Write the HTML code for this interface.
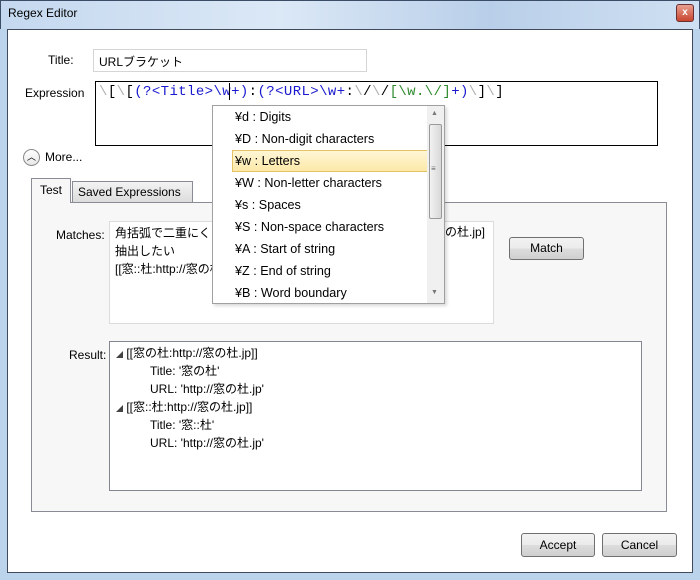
<!DOCTYPE html>
<html><head><meta charset="utf-8"><style>
*{margin:0;padding:0;box-sizing:border-box}
body{width:700px;height:580px;position:relative;overflow:hidden;background:#bcd3ec;font-family:"Liberation Sans","Noto Sans CJK JP",sans-serif;font-size:12px;color:#000}
.a{position:absolute}
.tb{left:0;top:0;width:700px;height:29px;background:linear-gradient(90deg,#c4d8ef,#dbe8f6 40%,#b9cfe9 70%,#cfe0f2);border:1px solid #3b4d66;border-bottom:none}
.client{left:7px;top:29px;width:686px;height:544px;background:#fff;border:1px solid #3f4a5a}
.btn{border:1px solid #707070;border-radius:3px;background:linear-gradient(#f2f2f2,#ebebeb 50%,#dddddd 50%,#cfcfcf);text-align:center;line-height:21px;font-size:12px}
.mono{font-family:"Liberation Mono","DejaVu Sans Mono",monospace;font-size:14px;letter-spacing:0.4px}
.g{color:#b0b0b0}.b{color:#1a1ad0}.gr{color:#2e8b2e}
.it{left:22px;height:22px;line-height:22px;font-size:12.6px;white-space:nowrap}
.row{height:18px;line-height:18px;font-size:12px}
</style></head><body>
<div class="a tb"></div>
<div class="a" style="left:8px;top:6px;font-size:12px">Regex Editor</div>
<div class="a" style="left:676px;top:4px;width:18px;height:18px;border:1px solid #6b3030;border-radius:3px;background:linear-gradient(#e8a090,#c8452e);color:#fff;font-size:10px;text-align:center;line-height:16px;font-weight:bold">x</div>
<div class="a client"></div>
<div class="a" style="left:48px;top:53px">Title:</div>
<div class="a" style="left:93px;top:49px;width:274px;height:23px;border:1px solid #d5d5d5;padding:3px 5px">URLブラケット</div>
<div class="a" style="left:25px;top:86px;width:60px;overflow:hidden;white-space:nowrap">Expression</div>
<div class="a" style="left:95px;top:81px;width:563px;height:65px;border:1px solid #000"></div>
<div class="a mono" style="left:99px;top:84px;white-space:pre"><span class="g">\</span>[<span class="g">\</span>[<span class="b">(?&lt;Title&gt;\w+)</span>:<span class="b">(?&lt;URL&gt;\w+</span>:<span class="g">\</span>/<span class="g">\</span>/<span class="gr">[\w.\/]</span><span class="b">+)</span><span class="g">\</span>]<span class="g">\</span>]</div>
<div class="a" style="left:229px;top:83px;width:1px;height:17px;background:#000"></div>
<div class="a" style="left:23px;top:149px;width:17px;height:17px;border:1px solid #8a8a8a;border-radius:50%;background:linear-gradient(#fff,#e8e8e8);text-align:center;font-size:9px;line-height:14px">︿</div>
<div class="a" style="left:45px;top:150px">More...</div>
<div class="a" style="left:31px;top:202px;width:636px;height:310px;background:#f7f7f7;border:1px solid #898c95"></div>
<div class="a" style="left:31px;top:178px;width:40px;height:25px;background:#f7f7f7;border:1px solid #898c95;border-bottom:none;padding:4px 0 0 8px">Test</div>
<div class="a" style="left:72px;top:181px;width:121px;height:22px;background:linear-gradient(#f3f3f3,#dcdcdc);border:1px solid #898c95;padding:3px 0 0 5px">Saved Expressions</div>
<div class="a" style="left:56px;top:228px">Matches:</div>
<div class="a" style="left:109px;top:221px;width:385px;height:103px;background:#fff;border:1px solid #dcdcdc;padding:2px 5px;line-height:18px;white-space:nowrap;overflow:hidden">角括弧で二重にく<br>抽出したい<br>[[窓::杜:http://窓の杜.jp]]</div>
<div class="a" style="left:445px;top:223px;line-height:18px">の杜.jp]</div>
<div class="a btn" style="left:509px;top:237px;width:75px;height:23px">Match</div>
<div class="a" style="left:69px;top:348px">Result:</div>
<div class="a" style="left:109px;top:341px;width:533px;height:150px;background:#fff;border:1px solid #828790;padding:2px 0 0 6px">
<div class="row"><span style="font-size:7px;color:#444">◢</span> [[窓の杜:http://窓の杜.jp]]</div>
<div class="row" style="padding-left:34px">Title: '窓の杜'</div>
<div class="row" style="padding-left:34px">URL: 'http://窓の杜.jp'</div>
<div class="row"><span style="font-size:7px;color:#444">◢</span> [[窓::杜:http://窓の杜.jp]]</div>
<div class="row" style="padding-left:34px">Title: '窓::杜'</div>
<div class="row" style="padding-left:34px">URL: 'http://窓の杜.jp'</div>
</div>
<div class="a btn" style="left:521px;top:533px;width:74px;height:24px;line-height:22px">Accept</div>
<div class="a btn" style="left:602px;top:533px;width:75px;height:24px;line-height:22px">Cancel</div>
<div class="a" style="left:212px;top:105px;width:233px;height:199px;background:#fff;border:1px solid #a0a0a0;box-shadow:2px 2px 3px rgba(0,0,0,.15)">
<div class="a" style="left:19px;top:44px;width:196px;height:22px;background:linear-gradient(#fff6d6,#fce9a8);border:1px solid #e5c365"></div>
<div class="a it" style="top:0">¥d : Digits</div>
<div class="a it" style="top:22px">¥D : Non-digit characters</div>
<div class="a it" style="top:44px">¥w : Letters</div>
<div class="a it" style="top:66px">¥W : Non-letter characters</div>
<div class="a it" style="top:88px">¥s : Spaces</div>
<div class="a it" style="top:110px">¥S : Non-space characters</div>
<div class="a it" style="top:132px">¥A : Start of string</div>
<div class="a it" style="top:154px">¥Z : End of string</div>
<div class="a it" style="top:176px">¥B : Word boundary</div>
<div class="a" style="left:214px;top:0;width:17px;height:197px;background:#f0f0f0"></div>
<div class="a" style="left:216px;top:18px;width:13px;height:95px;border:1px solid #9a9a9a;border-radius:2px;background:linear-gradient(90deg,#f2f2f2,#d8d8d8)"></div>
<div class="a" style="left:218px;top:4px;font-size:7px;color:#777">▲</div>
<div class="a" style="left:218px;top:183px;font-size:7px;color:#777">▼</div>
<div class="a" style="left:218px;top:58px;font-size:8px;color:#666">≡</div>
</div>
</body></html>
